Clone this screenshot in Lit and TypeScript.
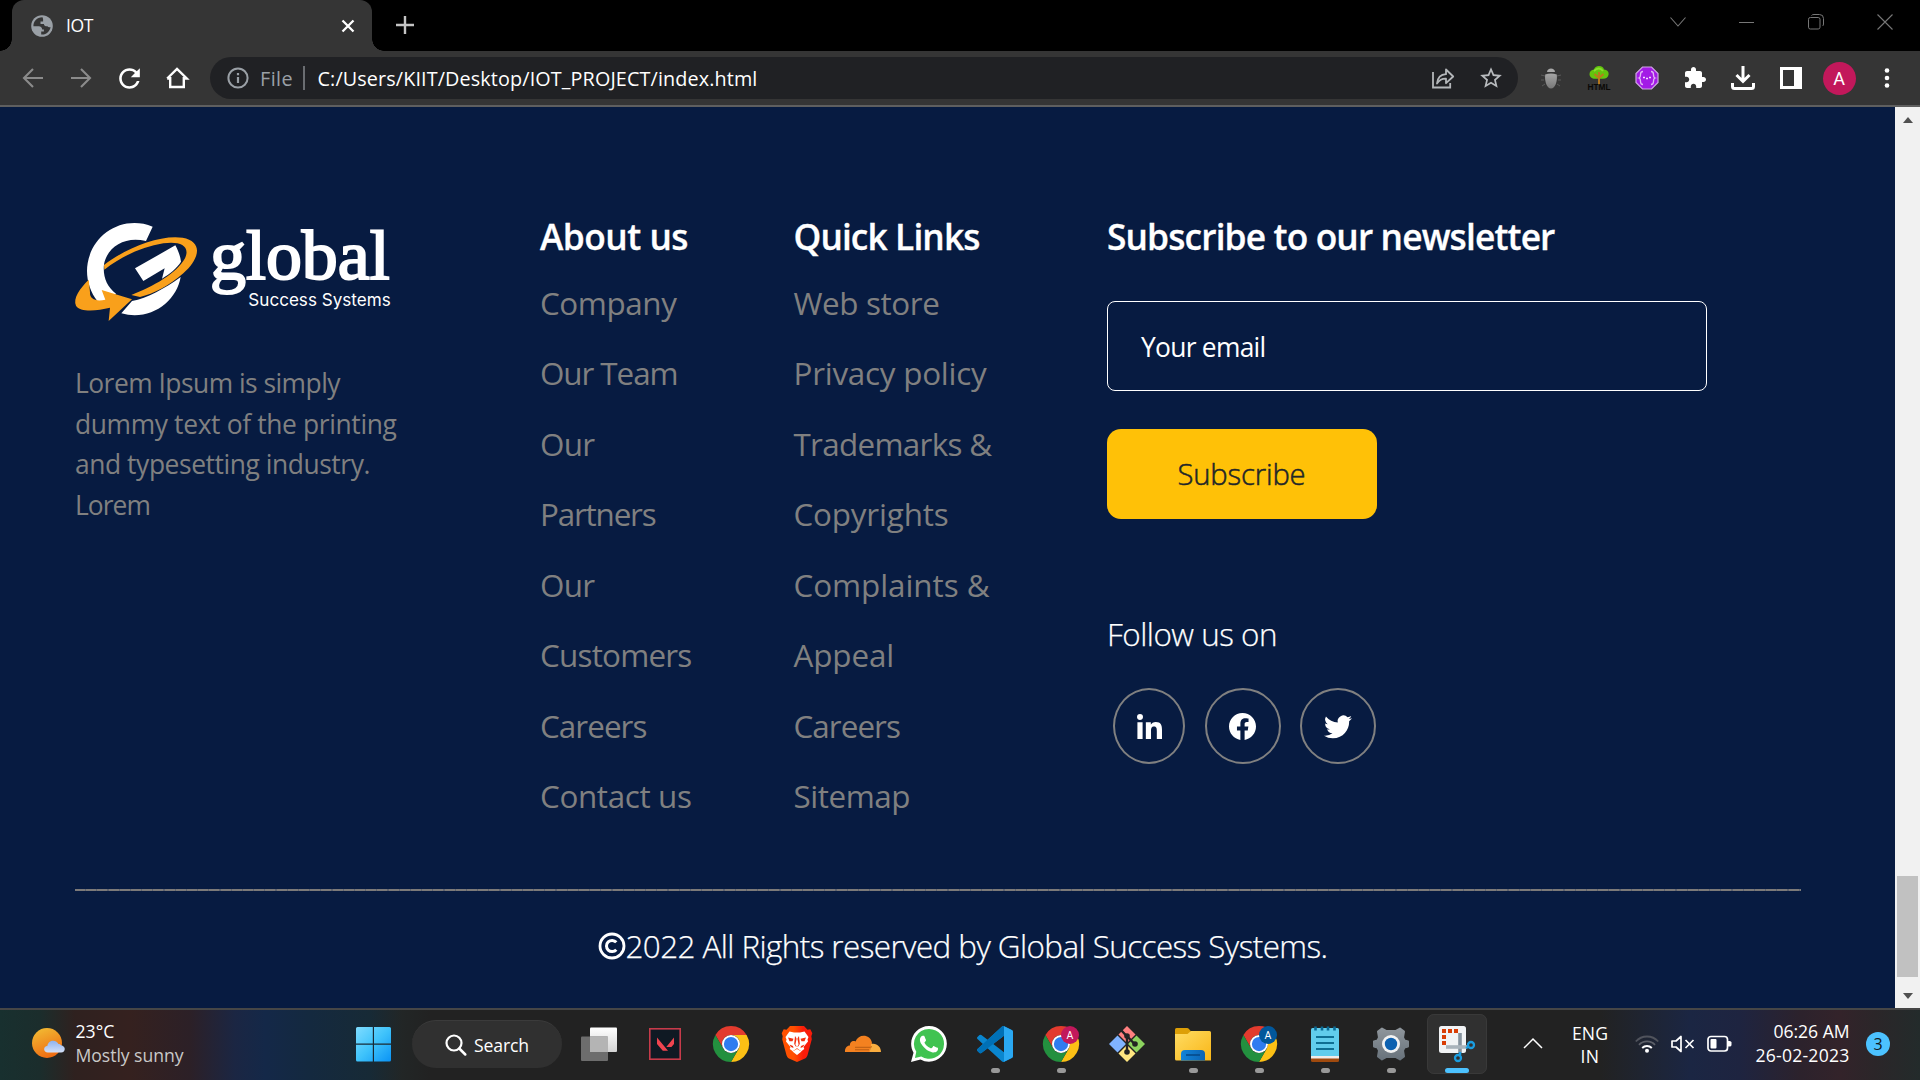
import { LitElement, html, svg, css, nothing } from "lit";
import type { TemplateResult } from "lit";
import { customElement, property } from "lit/decorators.js";

/** One line of text whose letter-spacing is tuned so that it occupies a given advance width. */
@customElement("fit-text")
class FitText extends LitElement {
  @property() text = "";
  @property({ type: Number }) width = 0;
  static styles = css`
    :host { display: block; white-space: pre; }
    .line { display: inline-block; }
  `;
  render() {
    return html`<span class="line">${this.text}</span>`;
  }
  updated() {
    const line = this.renderRoot.querySelector<HTMLElement>(".line")!;
    line.style.letterSpacing = "0px";
    const natural = line.getBoundingClientRect().width;
    line.style.letterSpacing = `${(this.width - natural) / this.text.length}px`;
  }
}

const fit = (text: string, width: number) => html`<fit-text .text=${text} .width=${width}></fit-text>`;

const icon = (w: number, h: number, box: string, body: TemplateResult) =>
  html`<svg width=${w} height=${h} viewBox=${box} fill="none">${body}</svg>`;

/* ---------- browser chrome ---------- */

const globe = icon(22, 22, "0 0 22 22", svg`<circle cx="11" cy="11" r="10.800" fill="#9aa0a6"/>
  <path fill="#353535" d="M11.500 2.300C6 2.200 2.300 6.300 2.400 11.200h5.400c2 0 3.400 1.300 3.400 3.200h1.700v2.200h-2.700v2.900c5 .5 9-3.300 9.300-7.500-1.300.7-2.500.3-3-.8-1.800.2-3.600-.5-3.600-2.300H9.500V6.400h2.600V4.500c0-1-.4-1.600-.6-2.200z"/>`);
const tabClose = icon(14, 14, "0 0 14 14", svg`<path d="M1.500 1.500l11 11M12.500 1.500l-11 11" stroke="#fff" stroke-width="2.300"/>`);
const plus = icon(18, 18, "0 0 18 18", svg`<path d="M9 0v18M0 9h18" stroke="#c4c4c4" stroke-width="2.400"/>`);

const windowControls = [
  icon(16, 10, "0 0 16 10", svg`<path d="M.5.5l7.500 8.500L15.500.5" stroke="#777" stroke-width="1.100"/>`),
  icon(16, 16, "0 0 16 16", svg`<path d="M0 8.500h15" stroke="#777"/>`),
  icon(16, 16, "0 0 16 16", svg`<rect x=".5" y="3.500" width="11.500" height="11.500" rx="1.800" stroke="#777"/><path d="M3.500 1.500Q4 .5 6 .5h5.500q4 0 4 4V10q0 1.500-1 2" stroke="#777"/>`),
  icon(16, 16, "0 0 16 16", svg`<path d="M.5.5l15 15M15.500.5l-15 15" stroke="#777" stroke-width="1.100"/>`),
];

const navIcons = [
  icon(22, 22, "0 0 22 22", svg`<path d="M21 11H2M11 2l-9 9 9 9" stroke="#8b8b8b" stroke-width="2.100"/>`),
  icon(22, 22, "0 0 22 22", svg`<path d="M1 11h19M11 2l9 9-9 9" stroke="#8b8b8b" stroke-width="2.100"/>`),
  icon(31, 31, "0 0 24 24", svg`<path fill="#fff" d="M17.650 6.350C16.200 4.900 14.210 4 12 4c-4.420 0-7.990 3.580-7.990 8s3.570 8 7.990 8c3.730 0 6.840-2.550 7.730-6h-2.080c-.82 2.330-3.040 4-5.650 4-3.310 0-6-2.690-6-6s2.690-6 6-6c1.660 0 3.140.69 4.220 1.780L13 11h7V4l-2.350 2.350z"/>`),
  icon(22, 22, "0 0 22 22", svg`<path d="M4.200 10v10h13.600V10M1.200 11.500L11 2l9.800 9.500H17.800M1.200 11.500h3" stroke="#fff" stroke-width="2.400"/>`),
];

const info = icon(22, 22, "0 0 22 22", svg`<circle cx="11" cy="11" r="9.600" stroke="#9aa0a6" stroke-width="2"/><path d="M11 10v6M11 6v2.200" stroke="#9aa0a6" stroke-width="2.200"/>`);

const addressActions = [
  icon(24, 24, "0 0 24 24", svg`<path d="M2 6v15.500h17.200V17" stroke="#b4b7ba" stroke-width="1.800"/><path d="M6 17.500c.6-6 4-9 9-9.300V3.500l7.200 7-7.200 6.700v-4.500c-4-.2-6.600 1.300-9 4.800z" stroke="#b4b7ba" stroke-width="1.800" stroke-linejoin="round"/>`),
  icon(26, 26, "0 0 24 24", svg`<path fill="#b8bbbe" d="M22 9.240l-7.190-.62L12 2 9.190 8.630 2 9.240l5.460 4.730L5.820 21 12 17.270 18.180 21l-1.630-7.030L22 9.240zM12 15.400l-3.760 2.270 1-4.280-3.320-2.880 4.380-.38L12 6.100l1.710 4.040 4.380.38-3.320 2.880 1 4.280L12 15.400z"/>`),
];

const extensions = [
  icon(24, 24, "0 0 24 24", svg`
    <defs><linearGradient id="bug" x1="0" y1="0" x2="0" y2="1"><stop offset="0" stop-color="#a5a5a5"/><stop offset="1" stop-color="#777"/></linearGradient></defs>
    <path d="M2 9l4 1M22 9l-4 1M2 14h3M22 14h-3M3 20l3-2M21 20l-3-2" stroke="#5a5a5a" stroke-width="1"/>
    <path d="M8 6C8 1.200 16 1.200 16 6z" fill="#a9a9a9"/><path d="M6.200 8.500q5.800-2 11.600 0c.8 6.500-1.500 14-5.800 14S5.400 15 6.200 8.500z" fill="url(#bug)"/>`),
  icon(26, 26, "0 0 26 26", svg`
    <path d="M13 1c3 0 4.500 1.500 5 3.500 3 .3 5 2 4.600 5-.3 3-3 4.500-6 4.300h-7C6 14 3.600 12 3.500 9.300 3.400 6.500 5.300 5 8 4.500 8.600 2.400 10.400 1 13 1z" fill="#63c50e"/>
    <path d="M8 6q5-5 9 0" stroke="#86e02c" stroke-width="2"/><path d="M13 20V7M13 13L8.500 9M13 13l4.500-4" stroke="#bb7a1c" stroke-width="1.900"/>
    <text x="13" y="24.800" text-anchor="middle" class="tree-label" textLength="23" lengthAdjust="spacingAndGlyphs">HTML</text>`),
  icon(24, 24, "0 0 24 24", svg`
    <path d="M7.500 1h9L23 7.500v9L16.500 23h-9L1 16.500v-9z" fill="#a31ae6" stroke="#cfa5e4" stroke-width="1.200"/>
    <path d="M8 5.500q-2.500 0-2.500 3T4 12q1.500.5 1.500 3.500t2.500 3M16 5.500q2.500 0 2.500 3T20 12q-1.500.5-1.500 3.500t-2.500 3" stroke="#e0b3f5" stroke-width="1.300"/>
    <path d="M8 11.500h2M11 12.500h2M14 11.500h2" stroke="#f3dcff" stroke-width="1.700"/>`),
  icon(25, 25, "0 0 25 25", svg`<path fill="#fff" d="M20.500 11H19V7c0-1.100-.9-2-2-2h-4V3.500C13 2.120 11.880 1 10.500 1S8 2.120 8 3.500V5H4c-1.100 0-1.990.9-1.990 2v3.800H3.500c1.490 0 2.700 1.210 2.700 2.700s-1.210 2.700-2.700 2.700H2V20c0 1.100.9 2 2 2h3.800v-1.500c0-1.490 1.210-2.700 2.700-2.700 1.490 0 2.700 1.210 2.700 2.700V22H17c1.100 0 2-.9 2-2v-4h1.500c1.380 0 2.500-1.120 2.500-2.500S21.880 11 20.500 11z"/>`),
  icon(24, 24, "0 0 24 24", svg`<path d="M12 0v15M5.500 9l6.500 6.500L18.500 9" stroke="#fff" stroke-width="3"/><path d="M1.500 17v3.500q0 2 2 2h17q2 0 2-2V17" stroke="#fff" stroke-width="3"/>`),
  icon(22, 22, "0 0 22 22", svg`<path fill="#fff" fill-rule="evenodd" d="M0 0h22v22H0zM3 3v16h11V3z"/>`),
];

const kebab = icon(6, 20, "0 0 6 20", svg`<g fill="#fff"><circle cx="3" cy="2.500" r="2.300"/><circle cx="3" cy="10" r="2.300"/><circle cx="3" cy="17.500" r="2.300"/></g>`);

/* ---------- page ---------- */

const logo = icon(320, 99, "45 51 960 297", svg`
  <path fill="#fff" d="M278 65L258 108C195 92 142 125 132 178C128 215 140 245 168 266L150 290L112 288C88 258 76 215 83 175C98 85 190 30 278 65z"/>
  <path fill="#fff" d="M346 121C354 136 361 152 363 170C350 190 330 206 306 221L314 190L250 228L225 190z"/>
  <path fill="#fff" d="M362 216C350 290 270 350 184 325L216 288C262 280 315 250 362 216z"/>
  <path fill="#f9a01b" d="M132 180C200 128 300 88 368 98C430 110 420 160 370 205C330 240 280 268 240 276L214 270C280 245 350 205 375 160C392 122 360 108 310 115C250 125 190 150 133 194z"/>
  <path fill="#f9a01b" d="M86 224C60 250 38 280 48 302C60 322 110 318 150 308L146 348L216 283L125 255L136 284C110 290 88 284 90 262z"/>
  <text x="450" y="223" class="brand" textLength="539" lengthAdjust="spacingAndGlyphs">global</text>
  <text x="565" y="302" class="tagline" textLength="427" lengthAdjust="spacingAndGlyphs">Success Systems</text>`);

const aboutLinks: [string, number][] = [
  ["Company", 136.5], ["Our Team", 137.5], ["Our", 54.5], ["Partners", 115.5],
  ["Our", 54.5], ["Customers", 151.5], ["Careers", 106.5], ["Contact us", 151.5],
];
const quickLinks: [string, number][] = [
  ["Web store", 146], ["Privacy policy", 193], ["Trademarks &", 198], ["Copyrights", 155],
  ["Complaints &", 196], ["Appeal", 100.5], ["Careers", 106.5], ["Sitemap", 116.5],
];

const socials = [
  { cls: "narrow", art: icon(25, 25, "0 0 448 448", svg`<path fill="#fff" d="M100.280 448H7.400V148.900h92.880zM53.790 108.100C24.090 108.100 0 83.500 0 53.800a53.790 53.790 0 0 1 107.580 0c0 29.700-24.100 54.300-53.790 54.300zM447.900 448h-92.680V302.400c0-34.700-.7-79.200-48.290-79.200-48.290 0-55.690 37.700-55.690 76.700V448h-92.780V148.900h89.080v40.800h1.300c12.400-23.500 42.690-48.300 87.880-48.300 94 0 111.280 61.900 111.280 142.300V448z"/>`) },
  { cls: "", art: icon(27, 27, "0 0 16 16", svg`<path fill="#fff" d="M16 8.049c0-4.446-3.582-8.050-8-8.050C3.580 0-.002 3.603-.002 8.050c0 4.017 2.926 7.347 6.750 7.951v-5.625h-2.030V8.050H6.750V6.275c0-2.017 1.195-3.131 3.022-3.131.876 0 1.791.157 1.791.157v1.980h-1.009c-.993 0-1.303.621-1.303 1.258v1.510h2.218l-.354 2.326H9.250V16c3.824-.604 6.750-3.934 6.750-7.951z"/>`) },
  { cls: "", art: icon(28, 28, "0 0 16 16", svg`<path fill="#fff" d="M5.026 15c6.038 0 9.341-5.003 9.341-9.334 0-.14 0-.282-.006-.422A6.685 6.685 0 0 0 16 3.542a6.658 6.658 0 0 1-1.889.518 3.301 3.301 0 0 0 1.447-1.817 6.533 6.533 0 0 1-2.087.793A3.286 3.286 0 0 0 7.875 6.030a9.325 9.325 0 0 1-6.767-3.429 3.289 3.289 0 0 0 1.018 4.382A3.323 3.323 0 0 1 .64 6.575v.045a3.288 3.288 0 0 0 2.632 3.218 3.203 3.203 0 0 1-.865.115 3.230 3.230 0 0 1-.614-.057 3.283 3.283 0 0 0 3.067 2.277A6.588 6.588 0 0 1 .78 13.580a6.320 6.320 0 0 1-.78-.045A9.344 9.344 0 0 0 5.026 15z"/>`) },
];

const copyrightMark = icon(28, 28, "0 0 28 28", svg`<circle cx="14" cy="14" r="12" stroke="#fff" stroke-width="2.800"/><path d="M18.300 10.300a5.600 5.600 0 1 0 0 7.400" stroke="#fff" stroke-width="3"/>`);

/* ---------- taskbar ---------- */

const weather = icon(34, 34, "0 0 34 34", svg`
  <defs><linearGradient id="sun" x1=".2" y1="0" x2=".6" y2="1"><stop offset="0" stop-color="#f2bb33"/><stop offset="1" stop-color="#ee6a12"/></linearGradient>
  <linearGradient id="cloud" x1="0" y1="0" x2="0" y2="1"><stop offset="0" stop-color="#8fb3ee"/><stop offset="1" stop-color="#d3e0f8"/></linearGradient></defs>
  <circle cx="15" cy="17" r="15" fill="url(#sun)"/>
  <path d="M16 26.500c-5 0-5-6.500-.5-6.800C16 15 23 12.500 26.500 18c1 0 2 .4 2.500 1.300 5 .7 5 7.200 0 7.200z" fill="url(#cloud)"/>`);

const start = icon(36, 36, "0 0 36 36", svg`
  <defs><linearGradient id="win" x1="0" y1="0" x2="1" y2="1"><stop offset="0" stop-color="#7fdcff"/><stop offset=".5" stop-color="#3fc3fb"/><stop offset="1" stop-color="#0a93f5"/></linearGradient></defs>
  <path fill="url(#win)" d="M1.500 1h15.300v16.500H0V2.500Q0 1 1.500 1zM18 1h15.500q1.500 0 1.500 1.500v15H18zM0 18.700h16.800V35.500H1.500Q0 35.500 0 34zM18 18.700h17V34q0 1.500-1.500 1.500H18z"/>`);

const searchGlass = icon(22, 22, "0 0 22 22", svg`<circle cx="9" cy="9" r="7.500" stroke="#fff" stroke-width="2.200"/><path d="M14.300 14.500l6 6" stroke="#fff" stroke-width="2.500" stroke-linecap="round"/>`);

const chrome = (badge?: string) => icon(36, 36, "0 0 48 48", svg`
  <path fill="#e33b2e" d="M3.200 12A24 24 0 0 1 44.800 12H24A12 12 0 0 0 13.600 30z"/>
  <path fill="#fcc015" d="M44.800 12A24 24 0 0 1 24 48L34.400 30A12 12 0 0 0 24 12z"/>
  <path fill="#23903f" d="M24 48A24 24 0 0 1 3.200 12L13.600 30A12 12 0 0 0 34.400 30z"/>
  <circle cx="24" cy="24" r="12" fill="#fff"/><circle cx="24" cy="24" r="9.500" fill="#2f7cf0"/>
  ${badge ? svg`<circle cx="36" cy="12" r="12" fill=${badge}/><text x="36" y="17" text-anchor="middle" class="badge-letter">A</text>` : nothing}`);

const taskView = icon(36, 36, "0 0 36 36", svg`
  <defs><linearGradient id="tv" x1="0" y1="0" x2="0" y2="1"><stop offset="0" stop-color="#fff"/><stop offset="1" stop-color="#d4d4d4"/></linearGradient></defs>
  <rect x="9" y="1.500" width="27" height="24.500" rx="1" fill="url(#tv)"/><rect x="0" y="10.500" width="27" height="24.500" rx="1" fill="#6d6d6d"/><path d="M9 10.500h18V26H9z" fill="#b4b4b4"/>`);

const valorant = icon(34, 36, "0 0 34 36", svg`
  <rect x="1.800" y="2.800" width="30.400" height="30.400" fill="#0f1923" stroke="#c73b4a" stroke-width="1.600"/>
  <path fill="#f0444f" d="M9 11.500l11 13.300h-5.200L9 18zM26 11.500V18l-2.600 3h-5.100z"/>`);

const brave = icon(36, 36, "0 0 36 36", svg`
  <defs><linearGradient id="br"><stop offset=".4" stop-color="#ff5000"/><stop offset=".7" stop-color="#f91c0a"/></linearGradient></defs>
  <path fill="url(#br)" d="M11 0h14l3.500 3.800 2.800-.5 2 4-1 3 .5 3-4.300 16c-.5 1.500-1.400 2.500-2.500 3.300L18 36l-8-3.400c-1.100-.8-2-1.800-2.500-3.300L3.200 13.300l.5-3-1-3 2-4 2.800.5z"/>
  <path fill="#fff" d="M10.500 5.500L15 6.500h6l4.500-1 4 5.500-1 2.500.5 2-4.500 5.500.8 2-3 2.200-3.300-2.200L18 22l-1 1-3.300 2.200-3-2.200.8-2L7 15.500l.5-2-1-2.500z"/>
  <path fill="#f2310f" d="M9 11.500l5.500 1.300-1 2.500h-3zM27 11.500l-5.500 1.300 1 2.500h3zM16 10l-.8 8 1.600 2.500h2.400L20.800 18 20 10l-2 3zM10.500 18.500l3.500 1.500.5 2-2.500-1zM25.500 18.500L22 20l-.5 2 2.500-1z"/>
  <path fill="#fff" d="M18 11l1.600 7.500L18 21l-1.600-2.500zM13.500 25.500L18 23l4.500 2.500L18 29z"/>`);

const cloudflare = icon(36, 36, "0 0 36 36", svg`
  <path fill="#f48120" d="M0 26c-.3-4 2-6.500 5-6.500-.5-3.500 3-5.500 5.500-4C13.500 7.500 25.500 8 27 17l-2 9z"/>
  <path fill="#faad3f" d="M26 18c5.500-1.500 10 2.500 10 8H24.500l1-3.500z"/>
  <path d="M10 21.300h15l2-.6M10 23.800h14" stroke="#b35a12" stroke-width=".9"/>`);

const whatsapp = icon(36, 36, "0 0 16 16", svg`
  <path fill="#fff" d="M13.601 2.326A7.854 7.854 0 0 0 7.994 0C3.627 0 .068 3.558.064 7.926c0 1.399.366 2.760 1.057 3.965L0 16l4.204-1.102a7.933 7.933 0 0 0 3.790.965h.004c4.368 0 7.926-3.558 7.930-7.930A7.898 7.898 0 0 0 13.600 2.326z"/>
  <path fill="#40c351" d="M7.994 1.300a6.630 6.630 0 0 0-5.640 10.150L1.750 14.200l2.800-.65A6.630 6.630 0 1 0 7.994 1.300z"/>
  <path fill="#fff" d="M11.600 9.600c-.196-.1-1.170-.578-1.353-.643-.182-.065-.315-.099-.445.099-.133.197-.513.646-.627.775-.114.133-.232.148-.43.050-.197-.1-.836-.308-1.592-.985-.59-.525-.985-1.175-1.103-1.372-.114-.198-.011-.304.088-.403.087-.088.197-.232.296-.346.1-.114.133-.198.198-.33.065-.134.034-.248-.015-.347-.05-.099-.445-1.076-.612-1.470-.16-.389-.323-.335-.445-.34-.114-.007-.247-.007-.38-.007a.729.729 0 0 0-.529.247c-.182.198-.691.677-.691 1.654 0 .977.710 1.916.810 2.049.098.133 1.394 2.132 3.383 2.992.47.205.84.326 1.129.418.475.152.904.129 1.246.080.38-.058 1.171-.48 1.338-.943.164-.464.164-.86.114-.943-.049-.084-.182-.133-.38-.232z"/>`);

const vscode = icon(36, 36, "0 0 24 24", svg`
  <path fill="#0a86cf" d="M23.150 2.587L18.210.21a1.494 1.494 0 0 0-1.705.29l-9.460 8.630-4.120-3.128a.999.999 0 0 0-1.276.057L.327 7.261A1 1 0 0 0 .326 8.740L3.899 12 .326 15.260a1 1 0 0 0 .001 1.479L1.650 17.940a.999.999 0 0 0 1.276.057l4.120-3.128 9.460 8.630a1.492 1.492 0 0 0 1.704.29l4.942-2.377A1.500 1.500 0 0 0 24 20.060V3.939a1.500 1.500 0 0 0-.85-1.352zm-5.146 14.861L10.826 12l7.178-5.448v10.896z"/>
  <path fill="#0070b6" d="M.33 16.740a1 1 0 0 1 0-1.480L16.500.5q.7-.6 1.500-.4v6.450L2.930 18q-.7.400-1.280-.06z"/>
  <path fill="#2aa8f2" d="M18 .1l5.150 2.487a1.500 1.500 0 0 1 .85 1.352V20.060a1.500 1.500 0 0 1-.85 1.352L18 23.900z"/>`);

const git = icon(36, 36, "0 0 36 36", svg`
  <path fill="#ff8080" d="M18 0l8.500 8.500L18 17 9.500 8.500z"/><path fill="#80b3ff" d="M8.500 9.500L17 18l-8.500 8.500L0 18z"/>
  <path fill="#8dd35f" d="M27.500 9.500L36 18l-8.500 8.500L19 18z"/><path fill="#ffe680" d="M18 19l8.500 8.500L18 36l-8.500-8.500z"/>
  <path d="M12 4l6 6.500V26M18 10l7.500 8" stroke="#232323" stroke-width="2.400"/><circle cx="18" cy="10" r="2.800" fill="#232323"/><circle cx="26" cy="18" r="2.800" fill="#232323"/><circle cx="18" cy="26" r="2.800" fill="#232323"/>`);

const explorer = icon(36, 36, "0 0 36 36", svg`
  <defs><linearGradient id="fold" x1="0" y1="0" x2="1" y2="1"><stop offset="0" stop-color="#ffdc63"/><stop offset="1" stop-color="#f9b617"/></linearGradient>
  <linearGradient id="dock" x1="0" y1="0" x2="1" y2="0"><stop offset="0" stop-color="#1284d8"/><stop offset="1" stop-color="#0b63b4"/></linearGradient></defs>
  <path fill="#dd9f07" d="M0 3.500Q0 2 1.500 2H12q1.200 0 2 1l2 2.500L14 10H0z"/>
  <path fill="url(#fold)" d="M0 8h12.500L16 5h18.500Q36 5 36 6.500v28H1.500Q0 34.500 0 33z"/>
  <path fill="url(#dock)" d="M6 34.500V28q0-4 4-4h16q4 0 4 4v6.500z"/><path d="M11 29h14" stroke="#064a89" stroke-width="1.600"/>`);

const notepad = icon(36, 36, "0 0 36 36", svg`
  <path fill="#a04a0e" d="M4 31h28v3.500q0 1.500-1.500 1.500h-25Q4 36 4 34.500z"/><path fill="#f0ece8" d="M4 28h28v4.500H4z"/>
  <path fill="#61cdec" d="M4 3.500Q4 2 5.500 2h25Q32 2 32 3.500V30H4z"/>
  <path d="M8.500.5v4M15 .5v4M21 .5v4M27.500.5v4" stroke="#0b6a94" stroke-width="2.600"/><path d="M9 11h18M9 17h18M9 23h18" stroke="#0f6f93" stroke-width="2"/>`);

const settings = icon(36, 36, "0 0 36 36", svg`
  <defs><linearGradient id="gear" x1="0" y1="0" x2="0" y2="1"><stop offset="0" stop-color="#8e959b"/><stop offset="1" stop-color="#69737c"/></linearGradient></defs>
  <path fill="url(#gear)" stroke="url(#gear)" stroke-width="2" stroke-linejoin="round" d="M9 2.500L13.500 5h9L27 2.500l4 3-1 6 1.500 3 3.500 1v5l-3.500 1-1.500 3 1 6-4 3-4.500-2.500h-9L9 33.500l-4-3 1-6-1.500-3-3.500-1v-5l3.500-1 1.500-3-1-6z"/>
  <circle cx="18" cy="18" r="9" fill="#f2f2f2"/><circle cx="18" cy="18" r="6.200" fill="#0d61b0"/>`);

const snip = icon(36, 36, "0 0 36 36", svg`
  <rect x="0" y="0" width="27" height="27" rx="2.500" fill="#f1f3f5"/>
  <g fill="#d93d05"><path d="M3 3h4v4H3zM9 3h4v4H9zM15 3h4v4h-4zM3 9h4v4H3zM3 15h4v4H3z"/></g>
  <path d="M21 7V27" stroke="#85929d" stroke-width="3.600"/><path d="M7 21h21" stroke="#a9b3bb" stroke-width="3.600"/>
  <circle cx="32" cy="19" r="3" stroke="#1a9de0" stroke-width="2.300"/><circle cx="19" cy="32" r="3" stroke="#1a9de0" stroke-width="2.300"/>
  <path d="M27 22l3-1.500M21 26v3" stroke="#1a9de0" stroke-width="2.500"/>`);

const apps: { art: TemplateResult; state?: "running" | "active" }[] = [
  { art: taskView }, { art: valorant }, { art: chrome() }, { art: brave }, { art: cloudflare }, { art: whatsapp },
  { art: vscode, state: "running" }, { art: chrome("#c2185b"), state: "running" }, { art: git },
  { art: explorer, state: "running" }, { art: chrome("#01579b"), state: "running" }, { art: notepad, state: "running" },
  { art: settings, state: "running" }, { art: snip, state: "active" },
];

const trayChevron = icon(20, 11, "0 0 20 11", svg`<path d="M1 10l9-9 9 9" stroke="#fff" stroke-width="1.500"/>`);
const wifi = icon(24, 18, "0 0 24 18", svg`
  <path d="M.8 6.500a15 15 0 0 1 22.400 0" stroke="#50535c" stroke-width="1.800"/><path d="M4 9.800a11 11 0 0 1 16 0" stroke="#5d6069" stroke-width="1.800"/>
  <path d="M7.200 13a6.800 6.800 0 0 1 9.600 0" stroke="#fff" stroke-width="1.900"/><circle cx="12" cy="15.800" r="2" fill="#fff"/>`);
const muted = icon(24, 18, "0 0 24 18", svg`<path d="M1 6h4l5-4.500v15L5 12H1z" stroke="#fff" stroke-width="1.700" stroke-linejoin="round"/><path d="M14.500 5l8 8M22.500 5l-8 8" stroke="#fff" stroke-width="1.700"/>`);
const battery = icon(25, 18, "0 0 25 18", svg`<rect x="1" y="1.500" width="19.500" height="14.500" rx="3" stroke="#fff" stroke-width="1.700"/><rect x="3.500" y="4" width="6" height="9.500" rx="1" fill="#fff"/><path d="M21 6h1.500q2 0 2 1.500v2.500q0 1.500-2 1.500H21z" fill="#fff"/>`);

@customElement("app-root")
class AppRoot extends LitElement {
  static styles = css`
    :host {
      display: flex; flex-direction: column; width: 1920px; height: 1080px; overflow: hidden;
      font-family: "Open Sans", "Noto Sans", sans-serif; color: #fff; background: #000;
    }
    * { box-sizing: border-box; }
    svg { display: block; flex: none; overflow: visible; }

    .tabs { display: flex; height: 51px; background: #000; padding-left: 12px; }
    .tab {
      position: relative; display: flex; align-items: center; width: 360px; height: 51px; padding: 0 17px 0 19px;
      background: #353535; border-radius: 12px 12px 0 0; font-size: 17.6px; line-height: 51px;
    }
    .tab::before, .tab::after { content: ""; position: absolute; bottom: 0; width: 12px; height: 12px; }
    .tab::before { left: -12px; background: radial-gradient(circle at 0 0, #000 11.5px, #353535 12px); }
    .tab::after { right: -12px; background: radial-gradient(circle at 100% 0, #000 11.5px, #353535 12px); }
    .tab-title { flex: 1; padding-left: 13px; }
    .new-tab { width: 18px; margin: 16px 0 0 24px; }
    .controls { display: flex; margin-left: auto; padding-right: .5px; height: 43px; }
    .control { width: 69px; display: grid; place-items: center; }

    .toolbar { display: flex; align-items: center; height: 56px; background: #353535; padding-left: 9px; border-bottom: 2px solid #5f5f5f; }
    .cell { width: 48px; flex: none; display: grid; place-items: center; }
    .address {
      display: flex; align-items: center; width: 1308px; height: 42px; margin: 0 9px; padding: 0 3px 0 17px;
      border-radius: 21px; background: #202124; font-size: 19.8px; line-height: 43px;
    }
    .scheme { color: #9aa0a6; margin-left: 11px; width: 43px; }
    .divider { width: 2px; height: 24px; background: #6a6d71; margin-right: 12.500px; }
    .url { flex: 1; }
    .avatar { width: 33px; height: 33px; border-radius: 50%; background: #c2185b; display: grid; place-items: center; font: 18px/33px Roboto, sans-serif; }

    .viewport { display: flex; height: 901px; }
    .footer { flex: 1; background: #071b41; padding-top: 108px; }
    .columns { display: grid; grid-template-columns: 465px 253.500px 313px 1fr; height: 674px; padding-left: 75px; }
    .logo { margin: 7px 0 42.300px; }
    .brand { font: 208px "Liberation Serif", serif; fill: #fff; stroke: #fff; stroke-width: 6px; }
    .tagline { font: 51px Inter, sans-serif; fill: #fff; }
    .blurb { font-size: 26.400px; line-height: 40.400px; color: #808080; }
    .heading { font-size: 35.300px; line-height: 43px; font-weight: 600; -webkit-text-stroke: .3px #fff; }
    .links { margin-top: 9.800px; font-size: 31.400px; line-height: 70.500px; color: #808080; }
    .news { padding-left: .5px; }
    .email { width: 600px; height: 90px; margin-top: 43px; padding-left: 33px; border: 1.500px solid #fff; border-radius: 8px; font-size: 26.400px; line-height: 91.500px; }
    .subscribe {
      width: 270px; height: 90px; margin-top: 38px; padding-left: 70.500px; border-radius: 14px;
      background: #ffc107; color: #212529; font-size: 29.200px; font-weight: 300; line-height: 91px;
      -webkit-text-stroke: .5px #212529;
    }
    .follow { margin-top: 95px; font-size: 31.400px; line-height: 40px; font-weight: 300; -webkit-text-stroke: .25px #fff; }
    .socials { display: flex; gap: 19.500px; margin: 34px 0 0 6px; }
    .social { width: 76px; height: 76px; border: 2px solid #808080; border-radius: 50%; display: grid; place-items: center; }
    .social.narrow { width: 72px; }
    .rule { width: 1726px; height: 2px; margin-left: 75px; background: repeating-linear-gradient(90deg, #7c7a79 0 10px, #5f6470 10px 11.200px); }
    .legal {
      display: flex; align-items: center; margin: 33px 0 0 597.500px; font-size: 31.400px; line-height: 44px; font-weight: 300;
      -webkit-text-stroke: .25px #fff;
    }

    .scrollbar { width: 25px; background: #f1f1f1; display: flex; flex-direction: column; align-items: center; }
    .arrow { border: 5.500px solid transparent; }
    .arrow.up { border-top: 0; border-bottom: 6px solid #505050; margin: 10px 0 753px; }
    .arrow.down { border-bottom: 0; border-top: 6px solid #505050; margin-top: 16px; }
    .thumb { width: 21px; height: 101px; background: #c1c1c1; }

    .taskbar {
      display: flex; height: 72px; border-top: 2px solid #464646; font-size: 17.600px; line-height: 24px; padding-top: 4px;
      background: linear-gradient(90deg, #18302f 0, #1b2d2c 40px, #2f211f 75px, #35211f 130px, #2c2027 190px, #1b2643 235px,
        #142848 265px, #14293f 310px, #172a36 370px, #222626 402px, #222 430px, #222 1600px, #1f2430 1640px, #1b2643 1690px,
        #1e2440 1740px, #2c222c 1800px, #33232a 1840px, #2b2629 1875px, #232b2b 1920px);
    }
    .weather { display: flex; width: 356px; padding-left: 32px; }
    .weather svg { margin-top: 12px; }
    .conditions { padding: 5px 0 0 9.500px; }
    .muted { color: #c9c9c9; }
    .start { width: 36px; margin: 12px 20px 0 0; }
    .search {
      display: flex; align-items: center; width: 150px; height: 48px; margin-top: 6px; padding-left: 33px; gap: 7px;
      border-radius: 24px; background: #303030; border-top: 1px solid #3b3b3b; line-height: 46px;
    }
    .apps { display: flex; margin-left: 4px; }
    .app { display: flex; flex-direction: column; align-items: center; width: 66px; height: 60px; border-radius: 7px; }
    .app svg { margin-top: 12px; }
    .app::after { content: ""; margin-top: 6px; height: 5px; border-radius: 3px; }
    .app.running::after { width: 9px; background: #999; }
    .app.active { width: 60px; margin-left: 3px; background: #303030; outline: 1px solid #393939; outline-offset: -1px; }
    .app.active::after { width: 24px; background: #4cc2ff; }
    .tray { display: flex; flex: 1; padding-left: 36px; }
    .chev { margin-top: 24px; width: 20px; }
    .lang { display: flex; flex-direction: column; align-items: center; width: 36px; margin: 8px 0 0 29px; line-height: 23px; }
    .status { display: flex; gap: 12px; margin: 21px 0 0 27px; }
    .clock { display: flex; flex-direction: column; align-items: flex-end; width: 94px; margin: 5px 0 0 23.500px; }
    .count { width: 24px; height: 24px; margin: 18px 0 0 16.500px; border-radius: 50%; background: #4cc2ff; color: #101820; text-align: center; font-size: 16px; line-height: 24px; }
    .tree-label { font: 900 8.500px "Liberation Sans", sans-serif; fill: #0a0806; }
    .badge-letter { font: 14px Roboto, sans-serif; fill: #fff; }
  `;

  private linkColumn(title: string, width: number, links: [string, number][]) {
    return html`<section>
      <div class="heading">${fit(title, width)}</div>
      <div class="links">${links.map(([label, w]) => fit(label, w))}</div>
    </section>`;
  }

  render() {
    return html`
      <header class="tabs">
        <div class="tab">${globe}<div class="tab-title">${fit("IOT", 27)}</div>${tabClose}</div>
        <div class="new-tab">${plus}</div>
        <div class="controls">${windowControls.map((c) => html`<div class="control">${c}</div>`)}</div>
      </header>

      <nav class="toolbar">
        ${navIcons.map((i) => html`<div class="cell">${i}</div>`)}
        <div class="address">
          ${info}
          <div class="scheme">${fit("File", 33)}</div>
          <div class="divider"></div>
          <div class="url">${fit("C:/Users/KIIT/Desktop/IOT_PROJECT/index.html", 440)}</div>
          ${addressActions.map((i) => html`<div class="cell">${i}</div>`)}
        </div>
        ${extensions.map((i) => html`<div class="cell">${i}</div>`)}
        <div class="cell"><div class="avatar">A</div></div>
        <div class="cell">${kebab}</div>
      </nav>

      <main class="viewport">
        <footer class="footer">
          <div class="columns">
            <section>
              <div class="logo">${logo}</div>
              <div class="blurb">
                ${fit("Lorem Ipsum is simply", 265)}${fit("dummy text of the printing", 321.5)}
                ${fit("and typesetting industry.", 295)}${fit("Lorem", 75)}
              </div>
            </section>
            ${this.linkColumn("About us", 148, aboutLinks)}
            ${this.linkColumn("Quick Links", 186, quickLinks)}
            <section class="news">
              <div class="heading">${fit("Subscribe to our newsletter", 447.5)}</div>
              <div class="email">${fit("Your email", 124.5)}</div>
              <div class="subscribe">${fit("Subscribe", 128)}</div>
              <div class="follow">${fit("Follow us on", 170)}</div>
              <div class="socials">${socials.map((s) => html`<div class="social ${s.cls}">${s.art}</div>`)}</div>
            </section>
          </div>
          <div class="rule"></div>
          <div class="legal">${copyrightMark}${fit("2022 All Rights reserved by Global Success Systems.", 702)}</div>
        </footer>
        <aside class="scrollbar"><div class="arrow up"></div><div class="thumb"></div><div class="arrow down"></div></aside>
      </main>

      <footer class="taskbar">
        <div class="weather">${weather}
          <div class="conditions">${fit("23°C", 39)}<div class="muted">${fit("Mostly sunny", 108)}</div></div>
        </div>
        <div class="start">${start}</div>
        <div class="search">${searchGlass}${fit("Search", 55)}</div>
        <div class="apps">${apps.map((a) => html`<div class="app ${a.state ?? ""}">${a.art}</div>`)}</div>
        <div class="tray">
          <div class="chev">${trayChevron}</div>
          <div class="lang">${fit("ENG", 36)}${fit("IN", 19)}</div>
          <div class="status">${wifi}${muted}${battery}</div>
          <div class="clock">${fit("06:26 AM", 76)}${fit("26-02-2023", 94)}</div>
          <div class="count">3</div>
        </div>
      </footer>
    `;
  }
}
